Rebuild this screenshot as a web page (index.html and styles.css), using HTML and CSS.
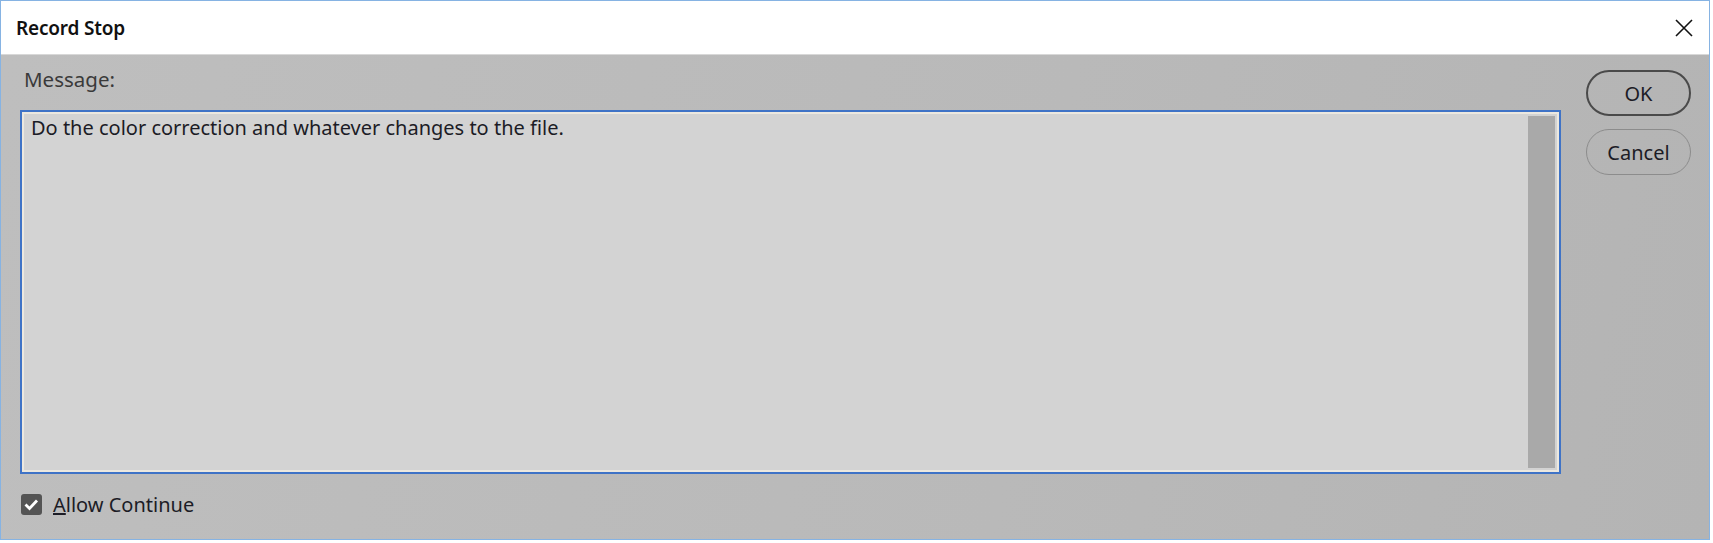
FILE: index.html
```html
<!DOCTYPE html>
<html lang="en">
<head>
    <meta charset="UTF-8">
    <title>Record Stop</title>
    <link rel="stylesheet" href="styles.css">
</head>
<body>
    <div class="window">
        <div class="titlebar">
            <span class="title">Record Stop</span>
            <svg class="close" width="18" height="18" viewBox="0 0 18 18">
                <path d="M1 1 L17 17 M17 1 L1 17" stroke="#111" stroke-width="1.6" fill="none"/>
            </svg>
        </div>

        <div class="content">
            <div class="main">
                <div class="label">Message:</div>
                <div class="message-box">
                    <div class="message-text">Do the color correction and whatever changes to the file.</div>
                    <div class="scroll-track"></div>
                </div>
                <div class="check-row">
                    <span class="checkbox">
                        <svg width="21" height="21" viewBox="0 0 21 21">
                            <path d="M4.5 10.5 L8.5 14.5 L16 6.5" stroke="#fff" stroke-width="2.8" fill="none"/>
                        </svg>
                    </span>
                    <span class="check-label"><u>A</u>llow Continue</span>
                </div>
            </div>

            <div class="side">
                <button class="button primary">OK</button>
                <button class="button">Cancel</button>
            </div>
        </div>
    </div>
</body>
</html>
```

FILE: styles.css
```css
body {
    margin: 0;
    background: #fff;
    font-family: "Noto Sans", "Open Sans", sans-serif;
    color: #1e1e24;
}
.window {
    width: 1710px;
    height: 540px;
    box-sizing: border-box;
    border: 1px solid #86b3e3;
    display: flex;
    flex-direction: column;
}
.titlebar {
    height: 53px;
    background: #fff;
    display: flex;
    align-items: center;
    justify-content: space-between;
    padding: 0 16px 0 15px;
    flex-shrink: 0;
}
.title {
    font-size: 19px;
    font-weight: 600;
    color: #111;
    letter-spacing: -0.2px;
}
.content {
    flex: 1;
    display: flex;
    background: linear-gradient(100deg, #bebebe 0%, #b9b9b9 60%, #b4b4b4 100%);
    border-top: 1px solid #d8d8d8;
}
.main {
    flex: 1;
    display: flex;
    flex-direction: column;
    padding: 11px 0 0 19px;
}
.label {
    font-size: 20.5px;
    line-height: 26px;
    color: #3a3a3a;
    padding-left: 4px;
}
.message-box {
    margin-top: 18px;
    height: 364px;
    box-sizing: border-box;
    border: 2px solid #3f73c6;
    box-shadow: inset 0 0 0 2px #ece8df;
    background: #d3d3d3;
    display: flex;
    padding: 4px 4px 4px 0;
}
.message-text {
    flex: 1;
    font-size: 20px;
    line-height: 22px;
    padding: 1px 0 0 9px;
    color: #1c1c26;
}
.scroll-track {
    width: 27px;
    background: #a9a9a9;
}
.check-row {
    display: flex;
    align-items: center;
    gap: 11px;
    margin-top: 17px;
    padding-left: 1px;
}
.checkbox {
    width: 21px;
    height: 21px;
    border-radius: 3px;
    background: #545454;
    display: flex;
}
.check-label {
    font-size: 20px;
    color: #1c1c26;
}
.side {
    width: 105px;
    margin: 15px 18px 0 25px;
    display: flex;
    flex-direction: column;
    gap: 13px;
}
.button {
    height: 46px;
    border-radius: 23px;
    border: 1.5px solid #8c8c8c;
    background: transparent;
    font-family: "Noto Sans", "Open Sans", sans-serif;
    font-size: 20px;
    color: #1c1c26;
    padding: 0;
}
.button.primary {
    border: 2px solid #4a4a4a;
}
```
